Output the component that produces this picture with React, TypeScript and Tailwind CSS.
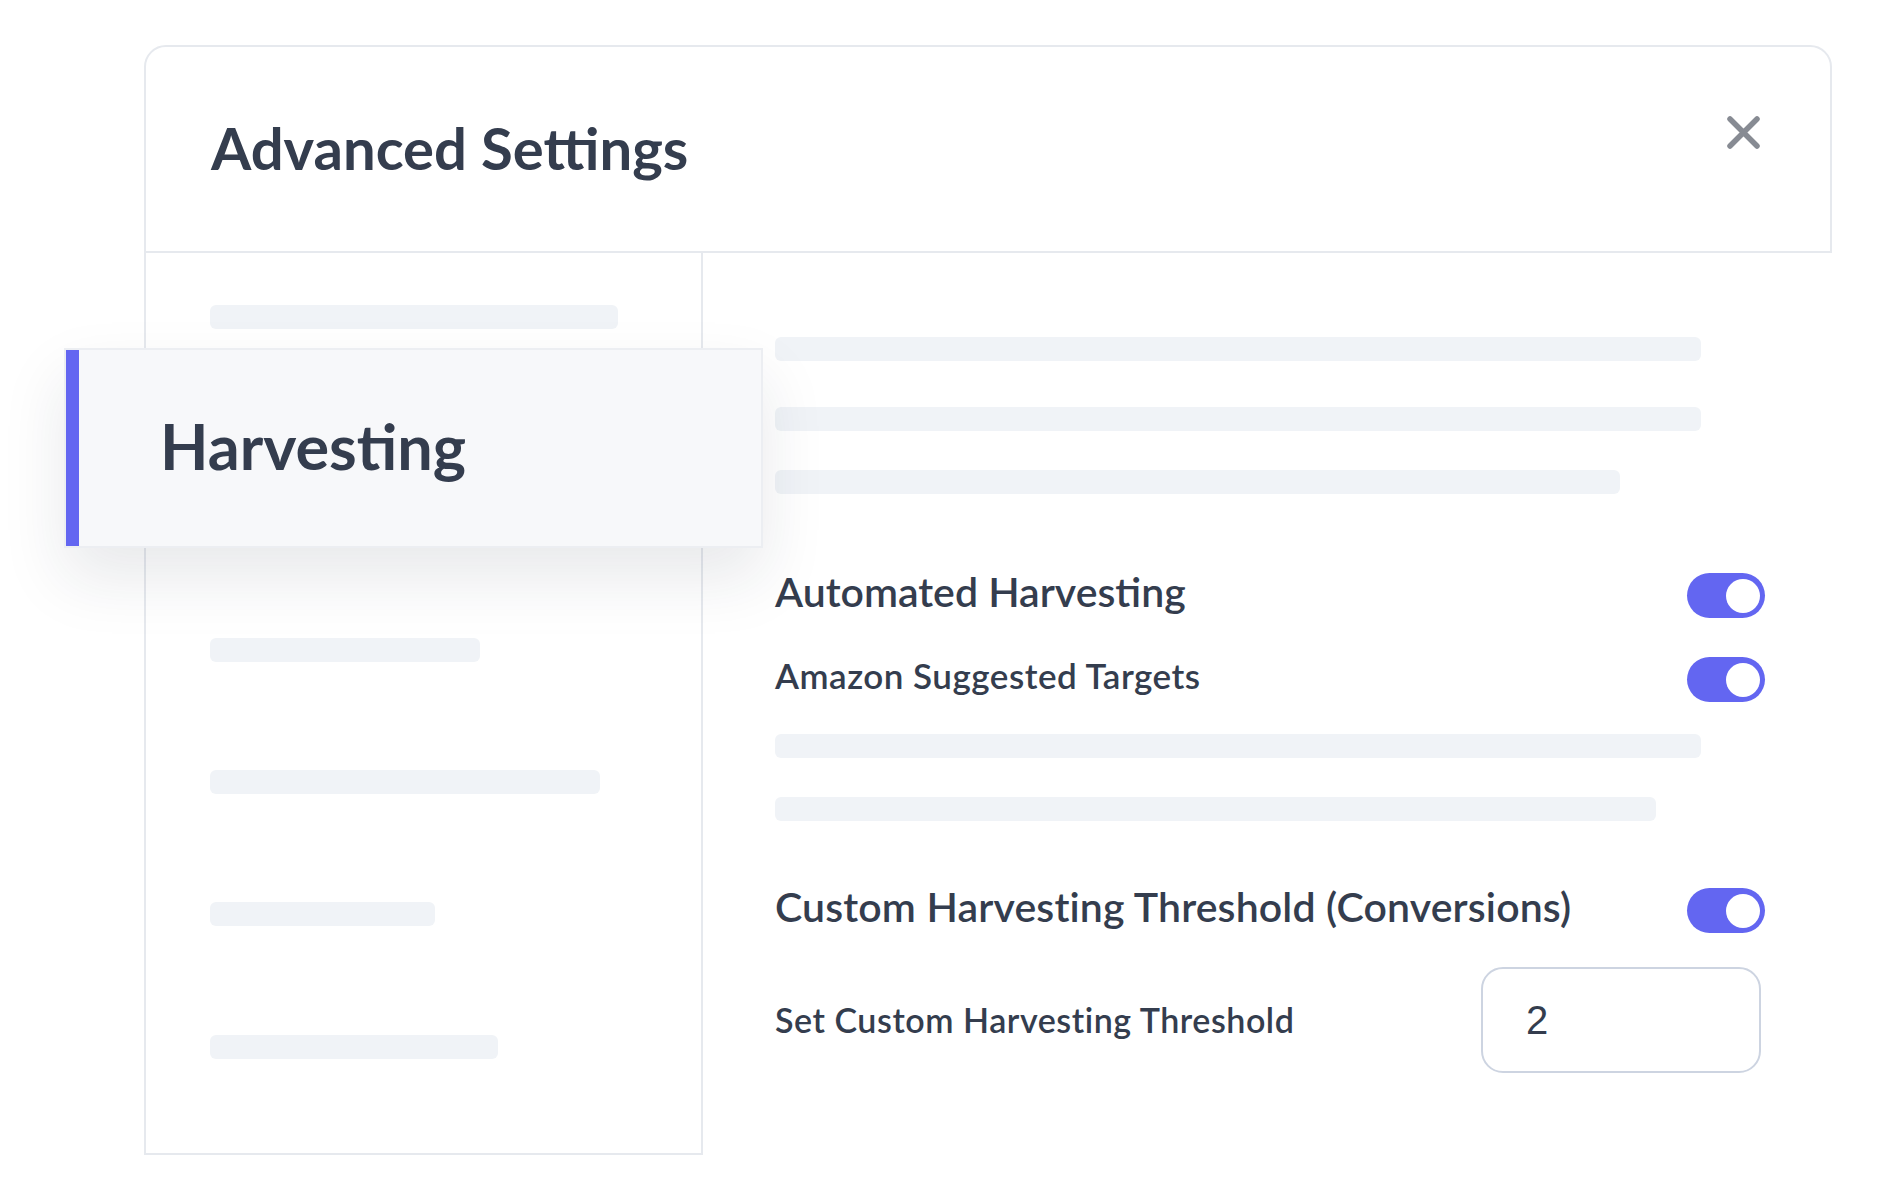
import React from "react";

function Toggle() {
  return (
    <div className="w-[78px] h-[45px] rounded-full bg-[#6366f1] flex items-center justify-end pr-[5px] shrink-0">
      <div className="w-[34px] h-[34px] rounded-full bg-white" />
    </div>
  );
}

function Bar({ w, className = "" }: { w: string; className?: string }) {
  return <div className={`h-[24px] rounded-[6px] bg-[#f0f3f7] ${w} ${className}`} />;
}

export default function App() {
  return (
    <div className="w-[1884px] h-[1198px] bg-white overflow-hidden pt-[45px] font-['Lato',sans-serif] text-[#343d4e]">
      <div className="ml-[144px] w-[1688px]">
        {/* Header */}
        <div className="h-[208px] border-2 border-[#e6e9ee] rounded-t-[22px] flex justify-between pl-[65px] pr-[70px]">
          <h1 className="self-center -mt-[2px] text-[58px] font-bold leading-[1.2]">
            Advanced Settings
          </h1>
          <button className="mt-[69px] w-[33px] h-[33px] self-start" aria-label="Close">
            <svg viewBox="0 0 33 33" width="33" height="33">
              <path d="M3 3 L30 30 M30 3 L3 30" stroke="#878b93" strokeWidth="5.5" strokeLinecap="round" />
            </svg>
          </button>
        </div>
        {/* Body */}
        <div className="flex">
          <div className="relative w-[559px] h-[902px] border-2 border-t-0 border-[#e6e9ee] pl-[64px] pt-[52px] flex flex-col">
            <Bar w="w-[408px]" />
            <Bar w="w-[270px]" className="mt-[309px]" />
            <Bar w="w-[390px]" className="mt-[108px]" />
            <Bar w="w-[225px]" className="mt-[108px]" />
            <Bar w="w-[288px]" className="mt-[109px]" />
            {/* Selected item card */}
            <div className="absolute left-[-82px] top-[95px] w-[699px] h-[200px] flex bg-[#f7f8fa] border-2 border-[#eceef2] shadow-[0_30px_60px_0_rgba(30,41,59,0.10)]">
              <div className="w-[13px] bg-[#6366f1]" />
              <div className="flex items-center pl-[81px]">
                <span className="text-[63px] font-bold leading-[1.2] -mt-[4px]">Harvesting</span>
              </div>
            </div>
          </div>
          <div className="flex-1 pl-[72px] pr-[67px] pt-[84px] flex flex-col">
            <Bar w="w-[926px]" />
            <Bar w="w-[926px]" className="mt-[46px]" />
            <Bar w="w-[845px]" className="mt-[39px]" />
            <div className="mt-[79px] flex items-center justify-between">
              <span className="text-[41px] font-semibold leading-[1.2] -mt-[8px]">Automated Harvesting</span>
              <Toggle />
            </div>
            <div className="mt-[39px] flex items-center justify-between">
              <span className="text-[35px] font-semibold leading-[1.2] tracking-[0.5px] -mt-[9px]">
                Amazon Suggested Targets
              </span>
              <Toggle />
            </div>
            <Bar w="w-[926px]" className="mt-[32px]" />
            <Bar w="w-[881px]" className="mt-[39px]" />
            <div className="mt-[67px] flex items-center justify-between">
              <span className="text-[41px] font-semibold leading-[1.2] tracking-[0.15px] -mt-[8px]">
                Custom Harvesting Threshold (Conversions)
              </span>
              <Toggle />
            </div>
            <div className="mt-[34px] flex items-center justify-between">
              <span className="text-[34px] font-semibold leading-[1.2] tracking-[0.55px]">
                Set Custom Harvesting Threshold
              </span>
              <div className="mr-[4px] w-[280px] h-[106px] border-2 border-[#cdd4e1] rounded-[22px] flex items-center pl-[43px]">
                <span className="font-['Liberation_Sans',sans-serif] text-[40px] leading-none text-[#343d4e]">2</span>
              </div>
            </div>
          </div>
        </div>
      </div>
    </div>
  );
}
